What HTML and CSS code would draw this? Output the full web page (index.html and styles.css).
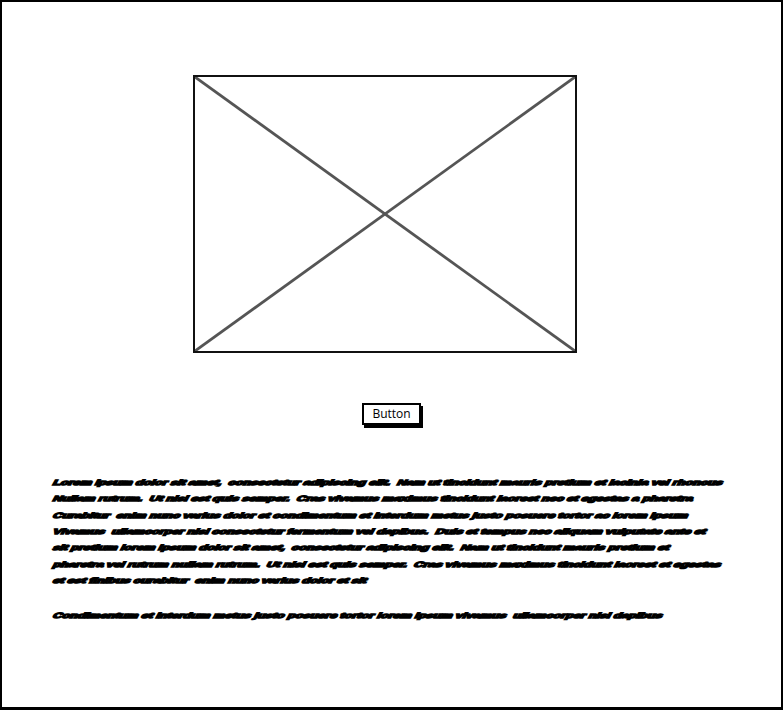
FILE: index.html
```html
<!DOCTYPE html>
<html>
<head>
<meta charset="utf-8">
<title>Wireframe</title>
<link rel="stylesheet" href="styles.css">
</head>
<body>
<div class="frame">
  <div class="image">
    <svg class="cross" viewBox="0 0 379 273" preserveAspectRatio="none">
      <line x1="0" y1="0" x2="379" y2="273"/>
      <line x1="379" y1="0" x2="0" y2="273"/>
    </svg>
  </div>
  <div class="btn-row"><button class="btn">Button</button></div>
  <div class="text">
    <p class="para">
      <span class="ln">Lorem ipsum dolor sit amet,  consectetur adipiscing elit.  Nam ut tincidunt mauris pretium et lacinia vel rhoncus</span>
      <span class="ln">Nullam rutrum.  Ut nisi est quis semper.  Cras vivamus maximus tincidunt laoreet nec et egestas a pharetra</span>
      <span class="ln">Curabitur  enim nunc varius dolor et condimentum et interdum metus justo posuere tortor ac lorem ipsum</span>
      <span class="ln">Vivamus  ullamcorper nisl consectetur fermentum vel dapibus.  Duis et tempus nec aliquam vulputate ante et</span>
      <span class="ln">sit pretium lorem ipsum dolor sit amet,  consectetur adipiscing elit.  Nam ut tincidunt mauris pretium et</span>
      <span class="ln">pharetra vel rutrum nullam rutrum.  Ut nisi est quis semper.  Cras vivamus maximus tincidunt laoreet et egestas</span>
      <span class="ln">et est finibus curabitur  enim nunc varius dolor et sit</span>
    </p>
    <p class="para">
      <span class="ln">Condimentum et interdum metus justo posuere tortor lorem ipsum vivamus  ullamcorper nisl dapibus</span>
    </p>
  </div>
</div>
</body>
</html>
```
FILE: styles.css
```css
html, body {
  margin: 0;
  padding: 0;
  background: #fff;
}

.frame {
  box-sizing: border-box;
  width: 783px;
  height: 710px;
  border: 2px solid #000;
  border-bottom-width: 3px;
  display: flex;
  flex-direction: column;
  align-items: center;
  padding-top: 73px;
  background: #fff;
}

.image {
  box-sizing: border-box;
  align-self: flex-start;
  margin-left: 191px;
  width: 384px;
  height: 278px;
  border: 2px solid #111;
}

.cross {
  display: block;
  width: 100%;
  height: 100%;
}

.cross line {
  stroke: #555;
  stroke-width: 2.8;
  vector-effect: non-scaling-stroke;
}

.btn-row {
  margin-top: 50px;
  display: flex;
  justify-content: center;
}

.btn {
  box-sizing: border-box;
  width: 59px;
  height: 22px;
  padding: 0;
  margin: 0;
  border: 2px solid #000;
  background: #fff;
  box-shadow: 2px 3px 0 #000;
  font-family: "Open Sans", "Liberation Sans", Arial, sans-serif;
  font-size: 12px;
  font-weight: 500;
  color: #000;
  line-height: 18px;
  border-radius: 0;
}

.text {
  align-self: stretch;
  margin-top: 49px;
  padding-left: 51px;
}

.para {
  margin: 0 0 19px 0;
}

.ln {
  display: block;
  white-space: pre;
  height: 16.33px;
  line-height: 16.33px;
  font-family: "Liberation Sans", Arial, sans-serif;
  font-weight: bold;
  font-size: 13px;
  letter-spacing: -0.2px;
  color: #000;
  -webkit-text-stroke: 2.3px #000;
  transform: scaleY(0.58) skewX(-18deg);
  transform-origin: 0 55%;
}
```
